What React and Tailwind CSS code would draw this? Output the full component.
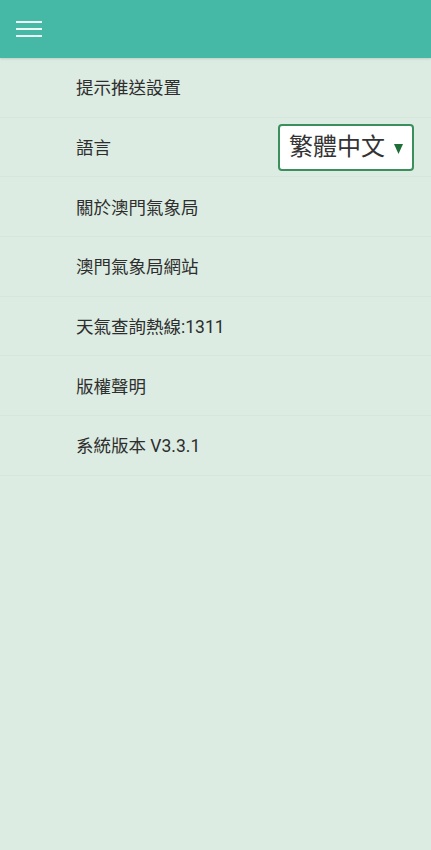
const items = [
  "提示推送設置",
  "語言",
  "關於澳門氣象局",
  "澳門氣象局網站",
  "天氣查詢熱線:1311",
  "版權聲明",
  "系統版本 V3.3.1",
];

const App = () => {
  return (
    <div
      className="min-h-screen w-full bg-[#dcece2] text-[#2e2e2e]"
      style={{ fontFamily: '"Roboto", "Noto Sans CJK TC", sans-serif' }}
    >
      {/* header */}
      <header className="h-[58px] bg-[#46b9a6] flex items-center px-4 shadow-[0_1px_2px_rgba(0,0,0,0.12)]">
        <div className="flex flex-col gap-[5px] w-[26px]">
          <span className="h-[2px] bg-white/90" />
          <span className="h-[2px] bg-white/90" />
          <span className="h-[2px] bg-white/90" />
        </div>
      </header>
      {/* menu */}
      <ul>
        {items.map((label, i) => (
          <li
            key={label}
            className="h-[59.7px] flex items-center justify-between pl-[76px] pr-[17px] border-b border-[#d5e7dc]"
          >
            <span className="text-[17.5px] pt-[2px]">{label}</span>
            {i === 1 && (
              <div className="h-[47px] w-[136px] flex items-center justify-between bg-white border-2 border-[#3b8f5c] rounded-[4px] pl-[9px] pr-[9px]">
                <span className="text-[24px] text-[#333] leading-none">繁體中文</span>
                <svg width="9" height="12" viewBox="0 0 9 12" className="mt-[3px]">
                  <polygon points="0,1 9,1 4.5,11" fill="#1f6e36" />
                </svg>
              </div>
            )}
          </li>
        ))}
      </ul>
    </div>
  );
};

export default App;
